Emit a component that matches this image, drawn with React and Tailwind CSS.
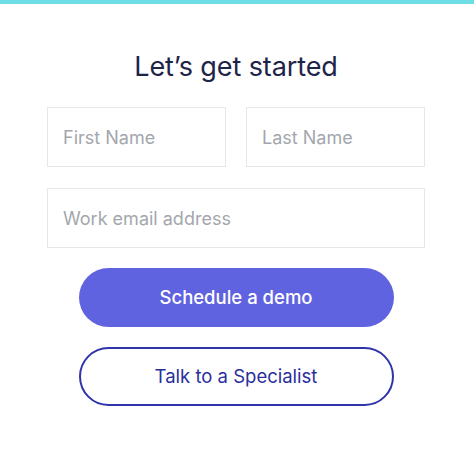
export default function App() {
    return (
        <div
            className="min-h-[449px] w-full bg-white"
            style={{ fontFamily: "Inter, 'Liberation Sans', sans-serif" }}
        >
            <div className="h-[4px] bg-[#6fdde6]" />
            <div className="flex flex-col items-center pl-[47px] pr-[49px] pt-[46px]">
                <h1 className="text-[27px] leading-[34px] font-normal text-[#1e2448] tracking-[-0.1px]">
                    Let’s get started
                </h1>

                {/* name row */}
                <div className="mt-[23px] grid w-full grid-cols-2 gap-[20px]">
                    <input
                        type="text"
                        placeholder="First Name"
                        className="h-[60px] border border-[#e6e7e9] px-[15px] text-[18px] text-[#1e2448] placeholder:text-[#a3a7ad] outline-none"
                    />
                    <input
                        type="text"
                        placeholder="Last Name"
                        className="h-[60px] border border-[#e6e7e9] px-[15px] text-[18px] text-[#1e2448] placeholder:text-[#a3a7ad] outline-none"
                    />
                </div>
                <input
                    type="email"
                    placeholder="Work email address"
                    className="mt-[21px] h-[60px] w-full border border-[#e6e7e9] px-[15px] text-[18px] text-[#1e2448] placeholder:text-[#a3a7ad] outline-none"
                />

                {/* actions */}
                <div className="mt-[20px] flex w-[315px] flex-col gap-[20px]">
                    <button
                        type="button"
                        className="h-[59px] rounded-full bg-[#6063e0] text-[18.5px] font-medium text-white"
                    >
                        Schedule a demo
                    </button>
                    <button
                        type="button"
                        className="h-[59px] rounded-full border-2 border-[#2f34a8] bg-white text-[18.5px] text-[#2a2f9c]"
                    >
                        Talk to a Specialist
                    </button>
                </div>
            </div>
        </div>
    )
}
